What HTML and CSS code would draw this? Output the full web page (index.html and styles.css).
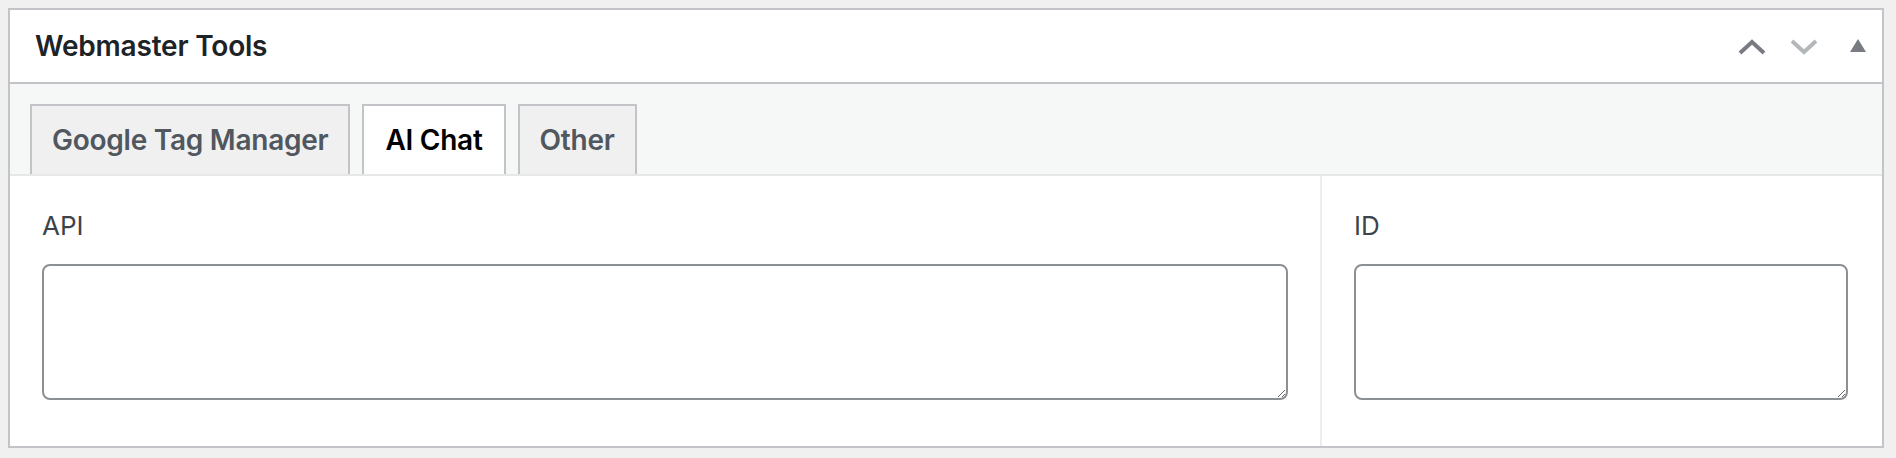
FILE: index.html
```html
<!DOCTYPE html>
<html lang="en">
<head>
<meta charset="utf-8">
<title>Webmaster Tools</title>
<link rel="stylesheet" href="styles.css">
</head>
<body>
<div class="postbox">
  <div class="postbox-header">
    <h2 class="hndle">Webmaster Tools</h2>
    <div class="handle-actions">
      <button class="handle-btn" aria-label="Move up">
        <svg width="28" height="16" viewBox="0 0 28 16"><path d="M2 14 L14 3 L26 14" fill="none" stroke="#787c82" stroke-width="4"/></svg>
      </button>
      <button class="handle-btn disabled" aria-label="Move down">
        <svg width="28" height="16" viewBox="0 0 28 16"><path d="M2 2 L14 13 L26 2" fill="none" stroke="#b4b7ba" stroke-width="4"/></svg>
      </button>
      <button class="handle-btn toggle" aria-label="Toggle panel">
        <svg width="16" height="13" viewBox="0 0 16 13"><path d="M8 0 L16 13 L0 13 Z" fill="#787c82"/></svg>
      </button>
    </div>
  </div>
  <div class="tab-strip">
    <a class="nav-tab">Google Tag Manager</a>
    <a class="nav-tab active">AI Chat</a>
    <a class="nav-tab">Other</a>
  </div>
  <div class="panel">
    <div class="field field-main">
      <label class="field-label" for="api">API</label>
      <textarea id="api" class="field-input"></textarea>
    </div>
    <div class="field field-side">
      <label class="field-label" for="id">ID</label>
      <textarea id="id" class="field-input"></textarea>
    </div>
  </div>
</div>
</body>
</html>
```

FILE: styles.css
```css
html, body {
  height: 100%;
}
body {
  margin: 0;
  padding: 8px 12px 10px 8px;
  box-sizing: border-box;
  background: #f0f0f1;
  font-family: Inter, "Noto Sans", "Liberation Sans", sans-serif;
  color: #1d2327;
}
.postbox {
  height: 100%;
  box-sizing: border-box;
  border: 2px solid #c3c4c7;
  background: #fff;
  display: flex;
  flex-direction: column;
}
.postbox-header {
  height: 72px;
  border-bottom: 2px solid #c3c4c7;
  display: flex;
  align-items: center;
  justify-content: space-between;
  padding: 0 16px 0 25px;
}
.hndle {
  margin: 0;
  font-size: 28px;
  font-weight: 600;
  color: #1d2327;
  letter-spacing: -0.2px;
}
.handle-actions {
  display: flex;
  align-items: center;
  gap: 24px;
  padding-top: 2px;
}
.handle-btn {
  border: 0;
  background: none;
  padding: 0;
  margin: 0;
  display: flex;
  align-items: center;
  cursor: pointer;
}
.handle-btn.toggle {
  margin-left: 8px;
  margin-top: -3px;
}
.tab-strip {
  background: #f6f7f7;
  padding: 20px 20px 0 20px;
  display: flex;
  gap: 12px;
}
.nav-tab {
  height: 68px;
  box-sizing: content-box;
  padding: 0 20px;
  border: 2px solid #c3c4c7;
  border-bottom: 0;
  background: #f0f0f1;
  color: #50575e;
  font-size: 28px;
  font-weight: 600;
  display: flex;
  align-items: center;
  letter-spacing: -0.25px;
}
.nav-tab.active {
  background: #fff;
  color: #000;
  padding: 0 21px;
}
.panel {
  flex: 1;
  border-top: 2px solid #e6e7e8;
  display: grid;
  grid-template-columns: 1310px 1fr;
}
.field {
  padding: 32px 32px 0 32px;
  display: flex;
  flex-direction: column;
}
.field-side {
  border-left: 2px solid #ededee;
  padding-right: 34px;
}
.field-label {
  font-size: 26px;
  color: #3c434a;
  line-height: 36px;
  margin-bottom: 20px;
}
.field-input {
  height: 136px;
  box-sizing: border-box;
  border: 2px solid #8c8f94;
  border-radius: 8px;
  background: #fff;
  font-family: inherit;
  font-size: 26px;
  margin: 0;
}
```
